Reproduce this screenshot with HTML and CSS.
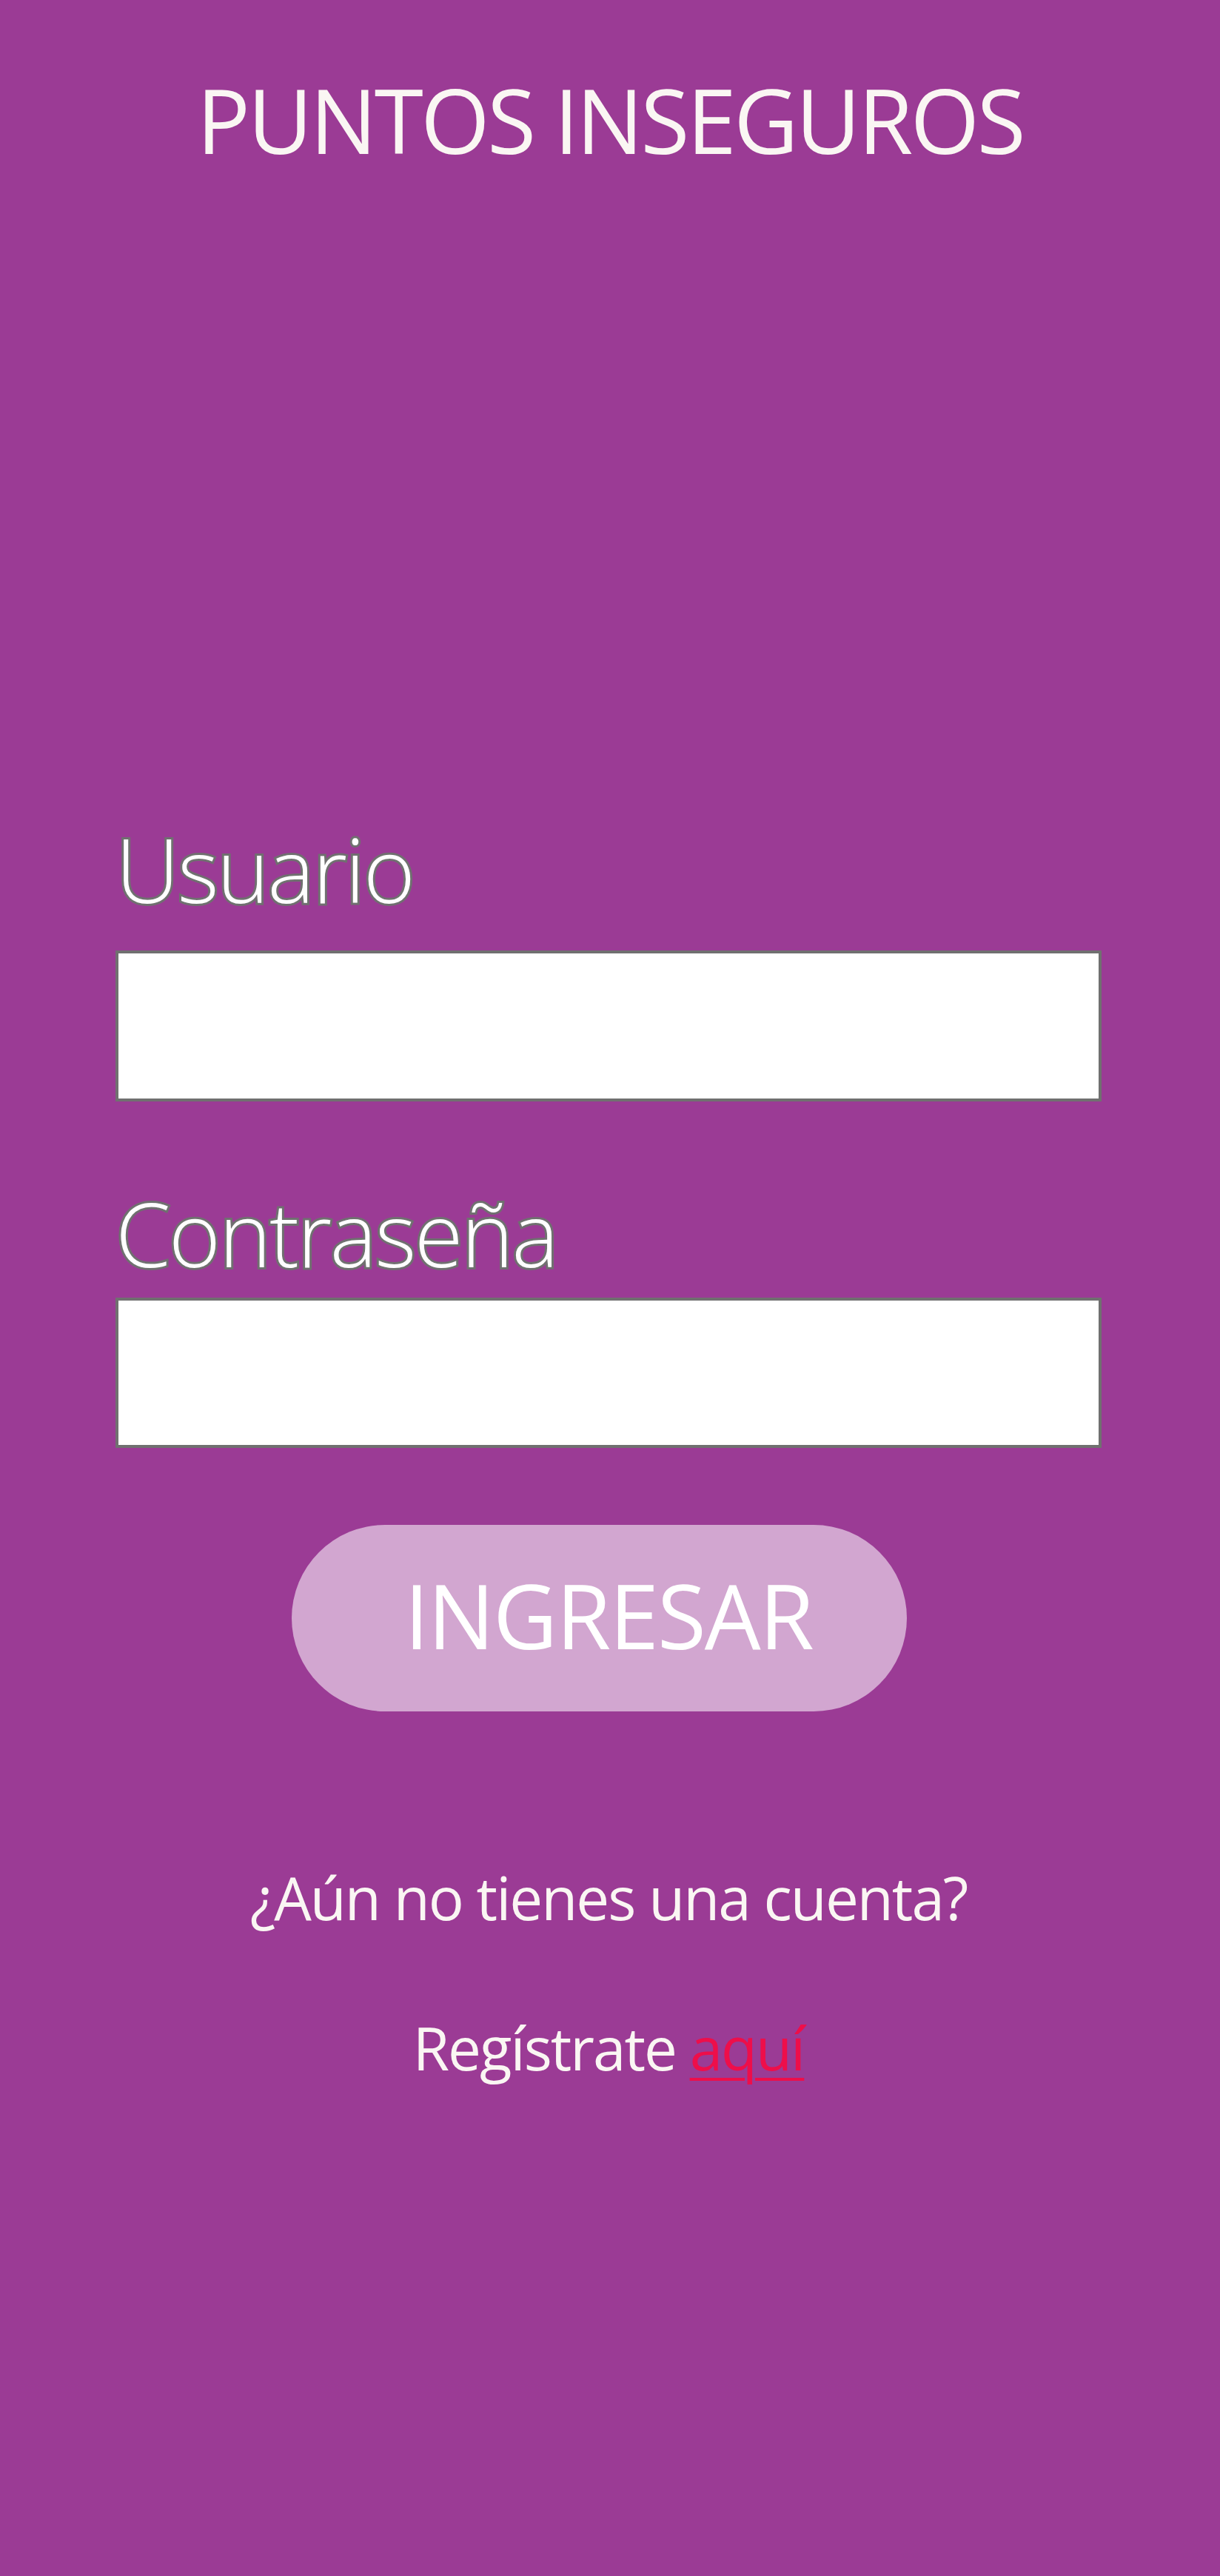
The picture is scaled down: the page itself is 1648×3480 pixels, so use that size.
FILE: index.html
```html
<!DOCTYPE html>
<html lang="es">
<head>
<meta charset="utf-8">
<title>Puntos Inseguros</title>
<link rel="stylesheet" href="styles.css">
</head>
<body>
<header class="top">
  <h1 class="title">PUNTOS INSEGUROS</h1>
</header>
<main class="login">
  <form class="form">
    <label class="label label-user" for="user">Usuario</label>
    <input class="field field-user" id="user" type="text">
    <label class="label label-pass" for="pass">Contraseña</label>
    <input class="field field-pass" id="pass" type="password">
    <div class="actions">
      <button class="btn" type="button">INGRESAR</button>
    </div>
  </form>
  <p class="note">¿Aún no tienes una cuenta?</p>
  <p class="note note-reg">Regístrate <a class="link" href="#">aquí</a></p>
</main>
</body>
</html>
```
FILE: styles.css
```css
html, body {
  margin: 0;
  padding: 0;
}
body {
  background: #9b3b95;
  font-family: "Open Sans", "Noto Sans", sans-serif;
  color: #faf6f3;
  min-height: 3480px;
}
.top {
  padding-top: 102px;
  display: flex;
  justify-content: center;
}
.title {
  margin: 0;
  font-size: 120px;
  line-height: 120px;
  font-weight: 400;
  letter-spacing: -3.4px;
  color: #faf6f3;
  padding-left: 0;
}
.login {
  padding: 0 160px 0 156px;
}
.form {
  display: flex;
  flex-direction: column;
  margin: 0;
  padding-top: 892px;
}
.label {
  font-size: 120px;
  line-height: 120px;
  font-weight: 300;
  color: #ffffff;
  padding-left: 0;
  letter-spacing: -2.6px;
  -webkit-text-stroke: 6px #707070;
  paint-order: stroke fill;
}
.field {
  box-sizing: border-box;
  width: 100%;
  height: 204px;
  border: 4px solid #707070;
  background: #ffffff;
  margin: 0;
  padding: 0;
  font-size: 60px;
  outline: none;
}
.field-user {
  margin-top: 50px;
}
.label-pass {
  margin-top: 118px;
}
.field-pass {
  margin-top: 27px;
  height: 203px;
}
.actions {
  display: flex;
  justify-content: center;
  margin-top: 104px;
  padding-right: 26px;
}
.btn {
  width: 831px;
  height: 252px;
  border: none;
  border-radius: 126px;
  background: #d2a6d0;
  color: #ffffff;
  font-family: "Open Sans", "Noto Sans", sans-serif;
  font-size: 120px;
  line-height: 120px;
  letter-spacing: -2px;
  padding: 0 0 8px 26px;
}
.note {
  margin: 0;
  text-align: center;
  font-size: 80px;
  line-height: 80px;
  letter-spacing: -2px;
  color: #faf6f3;
}
.note:first-of-type {
  margin-top: 211px;
}
.note-reg {
  margin-top: 123px;
}
.link {
  color: #ee0e4a;
  text-decoration: underline;
  text-decoration-thickness: 4px;
  text-underline-offset: 10px;
}
```
